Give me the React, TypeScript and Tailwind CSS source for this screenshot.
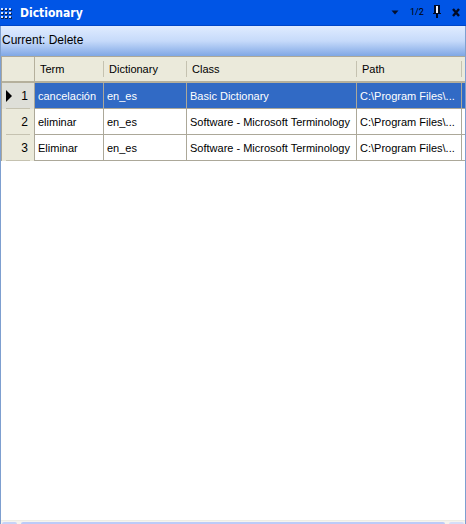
import React from "react";

type Entry = { term: string; dictionary: string; kind: string; path: string };

const entries: Entry[] = [
  { term: "cancelación", dictionary: "en_es", kind: "Basic Dictionary", path: "C:\\Program Files\\..." },
  { term: "eliminar", dictionary: "en_es", kind: "Software - Microsoft Terminology", path: "C:\\Program Files\\..." },
  { term: "Eliminar", dictionary: "en_es", kind: "Software - Microsoft Terminology", path: "C:\\Program Files\\..." },
];

const columns = ["Term", "Dictionary", "Class", "Path"];

function Grip() {
  const steps = [1, 5, 9];
  return (
    <svg width="12" height="14" viewBox="0 0 12 14" shapeRendering="crispEdges" aria-hidden="true">
      {steps.map((y) =>
        steps.map((x) => (
          <g key={`${x}-${y}`}>
            <rect x={x} y={y + 2} width="3" height="2" fill="#0a2458" />
            <rect x={x} y={y + 1} width="2" height="2" fill="#d6e2fb" />
          </g>
        )),
      )}
    </svg>
  );
}

function TitleBar() {
  return (
    <header className="flex h-[26px] items-center border-b border-[#0046c8] bg-[#0055e6] pr-[6px]">
      <Grip />
      <h1 className="ml-2 flex-1 font-['DejaVu_Sans_Condensed','DejaVu_Sans',sans-serif] text-[12px] leading-4 font-bold text-white">
        Dictionary
      </h1>
      <div className="flex items-center gap-[11px] text-black">
        <button type="button" aria-label="Menu" className="flex h-4 w-2 items-center">
          <svg width="8" height="5" viewBox="0 0 8 5" aria-hidden="true">
            <path d="M0.5 0.5h7L4 4.5z" fill="#04102e" />
          </svg>
        </button>
        <button type="button" className="w-3 pb-[2px] font-[Roboto,sans-serif] text-[9px] leading-4 whitespace-nowrap">
          1/2
        </button>
        <button type="button" aria-label="Pin" className="flex h-4 w-2 items-center pb-[2px]">
          <svg width="8" height="13" viewBox="0 0 8 13" shapeRendering="crispEdges" aria-hidden="true">
            <path d="M1 0h6v8h1v1H5v4H3V9H0V8h1z" fill="#000a24" />
            <path d="M3 1h2v7H3z" fill="#f4f7ff" />
          </svg>
        </button>
        <button type="button" aria-label="Close" className="flex h-4 w-2 items-center">
          <svg width="8" height="9" viewBox="0 0 8 9" aria-hidden="true">
            <path d="M1 1l6 7M7 1L1 8" stroke="#000a24" strokeWidth="2.4" />
          </svg>
        </button>
      </div>
    </header>
  );
}

function HeadCell({ children }: { children?: React.ReactNode }) {
  return (
    <th scope="col" className="border-b-2 border-[#b5b09c] p-0 text-left font-normal">
      <div className="flex h-4 items-center border-r border-[#c5c2b0] pl-[5px] leading-4">{children}</div>
    </th>
  );
}

function EntryRow({ entry, index }: { entry: Entry; index: number }) {
  const selected = index === 0;
  const cell = "border-r border-b border-[#aca899] p-0 pl-[3px] whitespace-nowrap";
  return (
    <tr className={selected ? "h-[26px] bg-[#316ac5] text-white" : "h-[26px] bg-white"}>
      <th
        scope="row"
        className={
          selected
            ? "border-r border-[#aca899] bg-[#dedfd8] p-0 font-normal text-black"
            : "border-r border-[#aca899] bg-[#ebeadb] p-0 font-normal text-black"
        }
      >
        <div className="mx-1 flex h-[26px] items-center justify-between border-b border-[#c5c2b0] pr-[2px] text-[12px]">
          {selected ? (
            <svg width="6" height="12" viewBox="0 0 6 12" aria-hidden="true">
              <path d="M0 0l6 6-6 6z" fill="#000" />
            </svg>
          ) : (
            <span />
          )}
          {index + 1}
        </div>
      </th>
      <td className={cell}>{entry.term}</td>
      <td className={cell}>{entry.dictionary}</td>
      <td className={cell}>{entry.kind}</td>
      <td className={cell}>{entry.path}</td>
      <td className="border-b border-[#aca899] p-0" />
    </tr>
  );
}

export default function App() {
  return (
    <main className="flex h-screen flex-col overflow-hidden bg-white font-['Liberation_Sans',sans-serif] text-black">
      <TitleBar />
      <section className="flex min-h-0 flex-1 flex-col border-x border-[#7d9fd0]">
        <p className="h-[30px] bg-linear-to-b from-[#e0ecff] via-[#c6dafa] to-[#80a7e4] pt-[6px] pl-px text-[12px] leading-4">
          Current: Delete
        </p>
        <table className="w-full table-fixed border-separate border-spacing-0 border-t border-l border-[#aca899] text-[11px] leading-4">
          <colgroup>
            <col className="w-[33px]" />
            <col className="w-[69px]" />
            <col className="w-[83px]" />
            <col className="w-[170px]" />
            <col />
            <col className="w-[3px]" />
          </colgroup>
          <thead>
            <tr className="h-[26px] bg-[#ebeadb]">
              <td className="border-r border-b-2 border-[#b5b09c] p-0" />
              {columns.map((name) => (
                <HeadCell key={name}>{name}</HeadCell>
              ))}
              <td className="border-b-2 border-[#b5b09c] p-0" />
            </tr>
          </thead>
          <tbody>
            {entries.map((entry, i) => (
              <EntryRow key={i} entry={entry} index={i} />
            ))}
          </tbody>
        </table>
        <div className="flex-1" />
        <div className="flex h-1 gap-1 border-t border-[#eeede5] bg-[#f5f4ef] px-px pt-px" aria-hidden="true">
          <div className="w-[15px] rounded-t-sm bg-[#c6d3f8]" />
          <div className="flex-1 rounded-t-sm bg-[#bccbf8]" />
          <div className="w-[15px] rounded-t-sm bg-[#d5def9]" />
        </div>
      </section>
    </main>
  );
}
